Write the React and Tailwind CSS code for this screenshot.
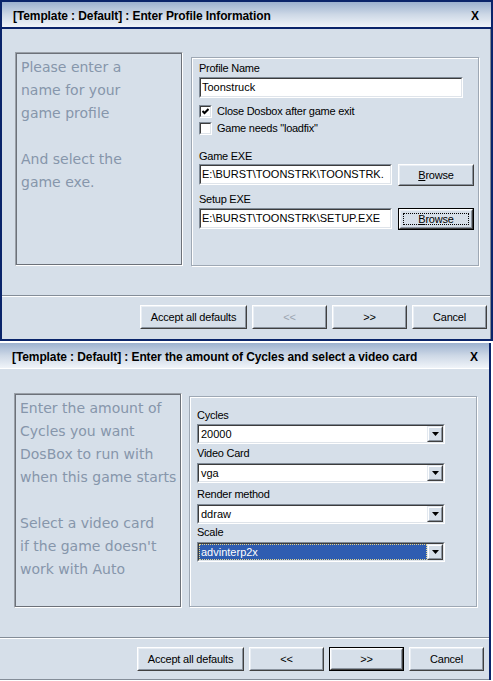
import React from "react";

const UI = "font-['Liberation_Sans',Arial,sans-serif]";

function TitleBar({ text, className = "" }) {
  return (
    <div
      className={`h-[25px] shrink-0 flex items-center justify-between bg-linear-to-b from-[#9cb1cf] via-[#cdd8e6] to-[#f0f4f9] pt-[2px] ${className}`}
    >
      <span className="text-[12px] font-bold leading-[14px] whitespace-nowrap tracking-[-0.1px]">{text}</span>
      <span className="text-[12px] font-bold leading-[14px]">X</span>
    </div>
  );
}

function Sunken({ className = "", innerClass = "", children }) {
  return (
    <div className={`border border-t-[#7f8a96] border-l-[#7f8a96] border-b-white border-r-white ${className}`}>
      <div
        className={`h-full border border-t-[#3c3c3c] border-l-[#3c3c3c] border-b-[#dfe4ea] border-r-[#dfe4ea] ${innerClass}`}
      >
        {children}
      </div>
    </div>
  );
}

function TextInput({ className = "", value }) {
  return (
    <Sunken className={`h-[21px] ${className}`} innerClass="bg-white overflow-hidden">
      <div className="pl-[1px] text-[11px] leading-[17px] whitespace-nowrap">{value}</div>
    </Sunken>
  );
}

function Label({ className = "", children }) {
  return (
    <div className={`text-[11px] leading-[13px] h-[13px] tracking-[-0.25px] whitespace-nowrap ${className}`}>
      {children}
    </div>
  );
}

function Check({ className = "", checked, label }) {
  return (
    <div className={`flex items-center h-[13px] ${className}`}>
      <Sunken className="w-[13px] h-[13px]" innerClass="bg-white flex items-center justify-center">
        {checked && (
          <svg width="7" height="7" viewBox="0 0 7 7">
            <polyline points="0.5,3 2.5,5 6.5,1" fill="none" stroke="black" strokeWidth="2" />
          </svg>
        )}
      </Sunken>
      <span className="ml-[5px] text-[11px] leading-[13px] tracking-[-0.25px] whitespace-nowrap">{label}</span>
    </div>
  );
}

function Btn({ className = "", children, focused, dotted, disabled }) {
  const inner = (
    <div className="h-full w-full border border-t-white border-l-white border-b-[#404040] border-r-[#404040]">
      <div className="h-full w-full border border-t-[#e9eef4] border-l-[#e9eef4] border-b-[#8a939e] border-r-[#8a939e] bg-[#d6dfe9] p-[2px]">
        <div
          className={`h-full w-full flex items-center justify-center text-[11px] tracking-[-0.2px] whitespace-nowrap border border-dotted ${
            dotted ? "border-black" : "border-transparent"
          } ${disabled ? "text-[#9ca5b0]" : "text-black"}`}
        >
          {children}
        </div>
      </div>
    </div>
  );
  return focused ? (
    <div className={`border border-black shrink-0 ${className}`}>{inner}</div>
  ) : (
    <div className={`shrink-0 ${className}`}>{inner}</div>
  );
}

function SelectBox({ value, selected, className = "" }) {
  return (
    <Sunken className={`w-[248px] h-[20px] ${className}`} innerClass="bg-white flex">
      {selected ? (
        <div className="flex-1 bg-[#2f5db1] text-white text-[11px] leading-[14px] pl-[1px] border border-dotted border-[#e6d68a]">
          {value}
        </div>
      ) : (
        <div className="flex-1 text-[11px] leading-[16px] pl-[2px]">{value}</div>
      )}
      <div className="w-[16px] h-full border border-t-[#e3e9f0] border-l-[#e3e9f0] border-b-[#404040] border-r-[#404040]">
        <div className="h-full w-full border border-t-white border-l-white border-b-[#8a939e] border-r-[#8a939e] bg-[#d6dfe9] flex items-center justify-center">
          <svg width="7" height="4" viewBox="0 0 7 4">
            <polygon points="0,0 7,0 3.5,4" fill="black" />
          </svg>
        </div>
      </div>
    </Sunken>
  );
}

function HelpPanel({ className = "", lines }) {
  return (
    <div className={`shrink-0 border border-t-[#9aa0a8] border-l-[#9aa0a8] border-b-white border-r-white ${className}`}>
      <div className="h-full border border-[#6c7179] pt-[2px] pl-[4px] font-['DejaVu_Sans',sans-serif] text-[14px] leading-[23px] text-[#8696ab]">
        {lines.map((l, i) => (
          <div key={i} className="h-[23px] whitespace-nowrap">
            {l}
          </div>
        ))}
      </div>
    </div>
  );
}

function GroupBox({ className = "", children }) {
  return (
    <div className={`shrink-0 border border-[#9ea8b4] shadow-[inset_1px_1px_0_#fff,1px_1px_0_#fff] ${className}`}>
      {children}
    </div>
  );
}

function Separator({ className = "" }) {
  return <div className={`h-[2px] border-t border-t-[#848d98] border-b border-b-white ${className}`} />;
}

function Window1() {
  return (
    <div className="w-[493px] h-[341px] border-2 border-[#0a246a] flex flex-col">
      <TitleBar text="[Template : Default] : Enter Profile Information" className="pl-[11px] pr-[12px]" />
      <div className="h-[2px] shrink-0 bg-[#0a246a]" />
      <div className="flex-1 bg-[#d6dfe9] border-r border-r-[#7f8893] flex flex-col pt-[23px]">
        <div className="flex items-start pl-[13px]">
          <HelpPanel
            className="w-[168px] h-[214px]"
            lines={["Please enter a", "name for your", "game profile", "", "And select the", "game exe."]}
          />
          <GroupBox className="ml-[8px] mt-[5px] w-[288px] h-[209px]">
            <div className="pt-[4px] pl-[7px] flex flex-col">
              <Label>Profile Name</Label>
              <TextInput className="mt-[2px] w-[264px]" value="Toonstruck" />
              <Check className="mt-[7px]" checked label="Close Dosbox after game exit" />
              <Check className="mt-[4px]" label={'Game needs "loadfix"'} />
              <Label className="mt-[15px]">Game EXE</Label>
              <div className="mt-[1px] flex items-start">
                <TextInput className="w-[193px]" value={"E:\\BURST\\TOONSTRK\\TOONSTRK."} />
                <Btn className="ml-[6px] w-[76px] h-[22px]">
                  <span>
                    <span className="underline">B</span>rowse
                  </span>
                </Btn>
              </div>
              <Label className="mt-[7px]">Setup EXE</Label>
              <div className="mt-[2px] flex items-start">
                <TextInput className="w-[193px]" value={"E:\\BURST\\TOONSTRK\\SETUP.EXE"} />
                <Btn className="ml-[6px] w-[76px] h-[22px]" focused dotted>
                  <span>
                    <span className="underline">B</span>rowse
                  </span>
                </Btn>
              </div>
            </div>
          </GroupBox>
        </div>
        <Separator className="mt-[29px]" />
        <div className="flex justify-end gap-[5px] pr-[3px] mt-[8px]">
          <Btn className="w-[107px] h-[24px]">Accept all defaults</Btn>
          <Btn className="w-[75px] h-[24px]" disabled>
            {"<<"}
          </Btn>
          <Btn className="w-[75px] h-[24px]">{">>"}</Btn>
          <Btn className="w-[75px] h-[24px]">Cancel</Btn>
        </div>
      </div>
    </div>
  );
}

function Window2() {
  return (
    <div className="mt-[2px] w-[491px] h-[337px] border-r-2 border-r-[#0a246a] flex flex-col">
      <TitleBar
        text="[Template : Default] : Enter the amount of Cycles and select a video card"
        className="pl-[12px] pr-[11px]"
      />
      <div className="h-[1px] shrink-0 bg-white" />
      <div className="flex-1 bg-[#d6dfe9] border-b border-b-[#848d98] flex flex-col pt-[24px]">
        <div className="flex items-start pl-[14px]">
          <HelpPanel
            className="w-[168px] h-[215px]"
            lines={[
              "Enter the amount of",
              "Cycles you want",
              "DosBox to run with",
              "when this game starts",
              "",
              "Select a video card",
              "if the game doesn't",
              "work with Auto",
            ]}
          />
          <GroupBox className="ml-[7px] mt-[3px] w-[288px] h-[211px]">
            <div className="pt-[12px] pl-[7px] flex flex-col">
              <Label>Cycles</Label>
              <SelectBox className="mt-[2px]" value="20000" />
              <Label className="mt-[3px]">Video Card</Label>
              <SelectBox className="mt-[3px]" value="vga" />
              <Label className="mt-[5px]">Render method</Label>
              <SelectBox className="mt-[3px]" value="ddraw" />
              <Label className="mt-[2px]">Scale</Label>
              <SelectBox className="mt-[3px]" value="advinterp2x" selected />
            </div>
          </GroupBox>
        </div>
        <Separator className="mt-[29px]" />
        <div className="flex justify-end gap-[5px] pr-[5px] mt-[8px]">
          <Btn className="w-[107px] h-[24px]">Accept all defaults</Btn>
          <Btn className="w-[75px] h-[24px]">{"<<"}</Btn>
          <Btn className="w-[75px] h-[24px]" focused>
            {">>"}
          </Btn>
          <Btn className="w-[75px] h-[24px]">Cancel</Btn>
        </div>
      </div>
    </div>
  );
}

export default function App() {
  return (
    <div className={`w-[493px] h-[681px] bg-white overflow-hidden text-black ${UI}`}>
      <Window1 />
      <Window2 />
    </div>
  );
}
